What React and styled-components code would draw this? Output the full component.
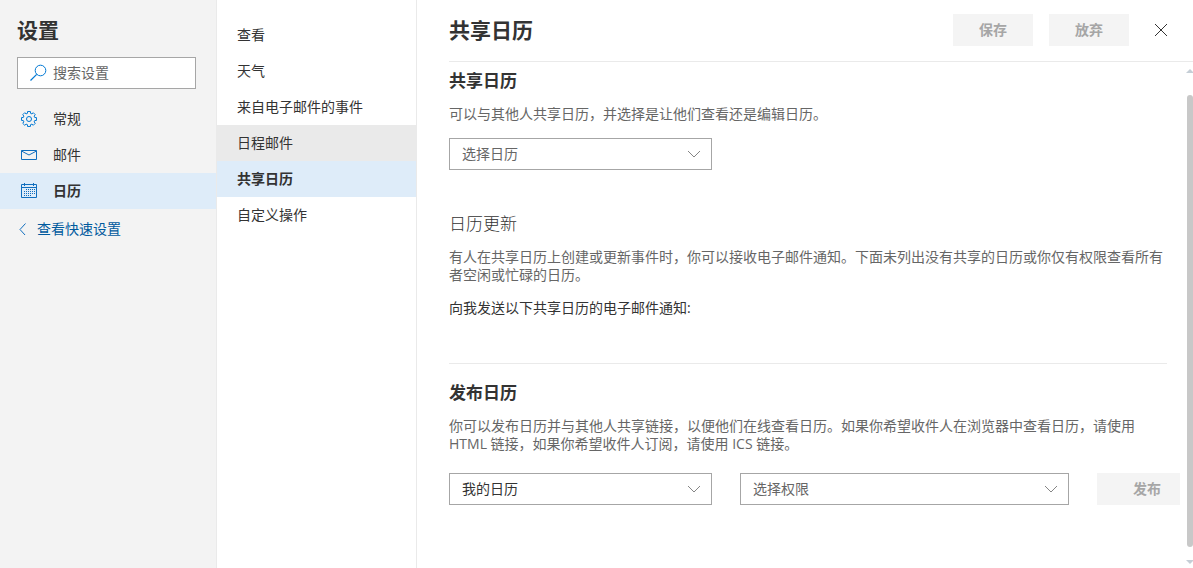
import React from 'react';
import styled, { createGlobalStyle } from "styled-components"

const GlobalStyle = createGlobalStyle`
  *, *::before, *::after {
    box-sizing: border-box;
  }

  body {
    margin: 0;
    background: #fff;
    color: #333;
    font: 14px/18px "Open Sans", "Noto Sans CJK SC", sans-serif;
  }

  button, input, select {
    font: inherit;
  }
`

const Page = styled.div`
  display: flex;
  min-height: 100vh;
`

//left column: settings categories
const Sidebar = styled.aside`
  flex: 0 0 217px;
  min-width: 0;
  background: #f3f3f3;
  border-right: 1px solid #eaeaea;
`

const SidebarTitle = styled.h1`
  margin: 0;
  padding: 16px 17px 13px;
  font-size: 21px;
  line-height: 28px;
`

const SearchBox = styled.label`
  display: flex;
  align-items: center;
  gap: 5px;
  height: 32px;
  margin: 0 20px 12px 17px;
  padding: 0 12px;
  background: #fff;
  border: 1px solid #a6a6a6;

  svg {
    flex: none;
  }

  input {
    flex: 1;
    width: 100%;
    min-width: 0;
    padding: 0;
    border: 0;
    outline: 0;
    background: none;
    color: #333;
  }

  input::placeholder {
    color: #666;
    opacity: 1;
  }
`

const NavItem = styled.button`
  display: flex;
  align-items: center;
  gap: 15px;
  width: 100%;
  height: 36px;
  padding: 0 20px;
  border: 0;
  background: ${p => p.$active ? "#deecf9" : p.$hovered ? "#eaeaea" : "transparent"};
  color: #333;
  font-weight: ${p => p.$active ? 700 : 400};
  text-align: left;
  cursor: pointer;

  &:hover {
    background: ${p => p.$active ? "#deecf9" : "#eaeaea"};
  }
`

const QuickLink = styled.a`
  display: flex;
  align-items: center;
  gap: 7px;
  height: 40px;
  padding: 0 18px;
  color: #005a9e;
  text-decoration: none;
`

//middle column: pages of the chosen category
const SubNav = styled.nav`
  flex: 0 0 200px;
  padding-top: 17px;
  border-right: 1px solid #eaeaea;
`

const Main = styled.main`
  display: flex;
  flex: 1;
  flex-direction: column;
  min-width: 0;
  padding-left: 32px;
`

const Header = styled.header`
  display: flex;
  align-items: center;
  gap: 16px;
  height: 62px;
  padding: 0 16px 2px 0;
  border-bottom: 1px solid #eaeaea;
`

const PageTitle = styled.h2`
  flex: 1;
  margin: 0;
  font-size: 21px;
  line-height: 28px;
`

const ActionButton = styled.button`
  min-width: 80px;
  height: 32px;
  padding: ${p => p.$wide ? "0 19px 0 36px" : "0 16px"};
  border: 0;
  background: #f4f4f4;
  color: #a6a6a6;
  font-weight: 700;
`

const CloseButton = styled.button`
  display: grid;
  place-items: center;
  width: 32px;
  height: 32px;
  padding: 0;
  border: 0;
  background: none;
  cursor: pointer;
`

const Body = styled.div`
  display: flex;
  flex: 1;
  gap: 6px;
`

const Content = styled.div`
  flex: 1;
  min-width: 0;
`

const Section = styled.section`
  padding-top: ${p => p.$top}px;
`

const SectionTitle = styled.h3`
  margin: 0 0 12px;
  font-size: 17px;
  line-height: 24px;
  font-weight: ${p => p.$light ? 300 : 700};
`

const Text = styled.p`
  margin: 0 0 15px;
  padding-right: 13px;
  color: ${p => p.$dark ? "#333" : "#666"};
`

const Divider = styled.hr`
  margin: 46px 13px 0 0;
  border: 0;
  border-top: 1px solid #eaeaea;
`

const FieldRow = styled.div`
  display: flex;
  gap: 28px;
  margin-top: 20px;
`

const SelectWrap = styled.div`
  position: relative;
  flex: ${p => p.$grow ? "1" : "0 0 263px"};
  width: 263px;
  min-width: 0;

  select {
    display: block;
    width: 100%;
    height: 32px;
    padding: 0 32px 0 12px;
    appearance: none;
    border: 1px solid #a6a6a6;
    border-radius: 0;
    background: #fff;
    color: ${p => p.$chosen ? "#333" : "#666"};
  }

  svg {
    position: absolute;
    top: 10px;
    right: 12px;
    pointer-events: none;
  }
`

const ScrollTrack = styled.div`
  display: flex;
  flex-direction: column;
  align-items: flex-end;
  flex: 0 0 7px;
  padding: 7px 0 4px;

  svg {
    flex: none;
  }
`

const ScrollThumb = styled.div`
  flex: 1;
  width: 6px;
  margin: 22px 0 13px;
  border-radius: 3px;
  background: #c8c8c8;
`

const Icon = ({ size = 18, color = "#106ebe", children }) => (
  <svg width={size} height={size} viewBox={`0 0 ${size} ${size}`} fill="none" stroke={color} aria-hidden="true">
    {children}
  </svg>
)

const SearchIcon = () => (
  <Icon color="#0078d4">
    <circle cx="10.5" cy="6.5" r="5.3" />
    <path d="M6.700 10.300 .5 16.500" strokeWidth="1.200" />
  </Icon>
)

//eight teeth, each one is two outer and two inner points
const gearPoints = Array.from({ length: 8 }, (_, i) =>
  [[-15, 5.9], [-11, 7.6], [11, 7.6], [15, 5.9]].map(([deg, r]) => {
    const a = (i * 45 + deg) * Math.PI / 180
    return `${(9 + r * Math.cos(a)).toFixed(2)},${(9 + r * Math.sin(a)).toFixed(2)}`
  }).join(" ")
).join(" ")

const GearIcon = () => (
  <Icon color="#0078d4">
    <polygon points={gearPoints} strokeLinejoin="round" />
    <circle cx="9" cy="9" r="2.500" />
  </Icon>
)

const MailIcon = () => (
  <Icon>
    <path d="M1.500 4.500h15v9h-15z" />
    <path d="M1.500 5 9 9l7.500-4" />
  </Icon>
)

const CalendarIcon = () => (
  <Icon>
    <path d="M1.500 2.500h15v13h-15zM1.500 5.500h15M4.500 1v3M13.500 1v3" />
    <path d="M6 7.500h9M4 9.500h11M4 11.500h11M4 13.500h8" strokeDasharray="1 1" />
  </Icon>
)

const Chevron = () => (
  <Icon size={12} color="#666">
    <path d="M0 3l6 6 6-6" strokeWidth=".8" />
  </Icon>
)

const Select = ({ label, options, chosen, grow }) => (
  <SelectWrap $chosen={chosen} $grow={grow}>
    <select aria-label={label}>
      {options.map(o => <option key={o}>{o}</option>)}
    </select>
    <Chevron />
  </SelectWrap>
)

const categories = [
  { name: "常规", icon: GearIcon },
  { name: "邮件", icon: MailIcon },
  { name: "日历", icon: CalendarIcon },
]

const pages = ["查看", "天气", "来自电子邮件的事件", "日程邮件", "共享日历", "自定义操作"]

export default function App() {
  return (
    <Page lang="zh-CN">
      <GlobalStyle />
      <Sidebar>
        <SidebarTitle>设置</SidebarTitle>
        <SearchBox>
          <SearchIcon />
          <input type="text" placeholder="搜索设置" aria-label="搜索设置" />
        </SearchBox>
        <nav>
          {categories.map(c => (
            <NavItem key={c.name} $active={c.name === "日历"}>
              <c.icon />
              {c.name}
            </NavItem>
          ))}
        </nav>
        <QuickLink href="#quick">
          <Icon size={12}><path d="M7.500 .5 2 6.500l5.500 6" /></Icon>
          查看快速设置
        </QuickLink>
      </Sidebar>

      <SubNav>
        {pages.map(name => (
          <NavItem key={name} $active={name === "共享日历"} $hovered={name === "日程邮件"}>
            {name}
          </NavItem>
        ))}
      </SubNav>

      <Main>
        <Header>
          <PageTitle>共享日历</PageTitle>
          <ActionButton disabled>保存</ActionButton>
          <ActionButton disabled>放弃</ActionButton>
          <CloseButton aria-label="关闭">
            <Icon size={12} color="#333"><path d="M0 0l12 12M12 0 0 12" /></Icon>
          </CloseButton>
        </Header>

        <Body>
          <Content>
            <Section $top={7}>
              <SectionTitle>共享日历</SectionTitle>
              <Text>可以与其他人共享日历，并选择是让他们查看还是编辑日历。</Text>
              <Select label="选择日历" options={["选择日历"]} />
            </Section>

            <Section $top={42}>
              <SectionTitle $light>日历更新</SectionTitle>
              <Text>有人在共享日历上创建或更新事件时，你可以接收电子邮件通知。下面未列出没有共享的日历或你仅有权限查看所有者空闲或忙碌的日历。</Text>
              <Text $dark>向我发送以下共享日历的电子邮件通知:</Text>
            </Section>

            <Divider />

            <Section $top={17}>
              <SectionTitle>发布日历</SectionTitle>
              <Text>你可以发布日历并与其他人共享链接，以便他们在线查看日历。如果你希望收件人在浏览器中查看日历，请使用 HTML 链接，如果你希望收件人订阅，请使用 ICS 链接。</Text>
              <FieldRow>
                <Select label="日历" options={["我的日历"]} chosen />
                <Select label="权限" options={["选择权限"]} grow />
                <ActionButton $wide disabled>发布</ActionButton>
              </FieldRow>
            </Section>
          </Content>

          <ScrollTrack aria-hidden="true">
            <svg width="7" height="4"><path d="M0 4l4-4 4 4z" fill="#c5ced6" /></svg>
            <ScrollThumb />
            <svg width="7" height="4"><path d="M0 0l4 4 4-4z" fill="#c5ced6" /></svg>
          </ScrollTrack>
        </Body>
      </Main>
    </Page>
  )
}
